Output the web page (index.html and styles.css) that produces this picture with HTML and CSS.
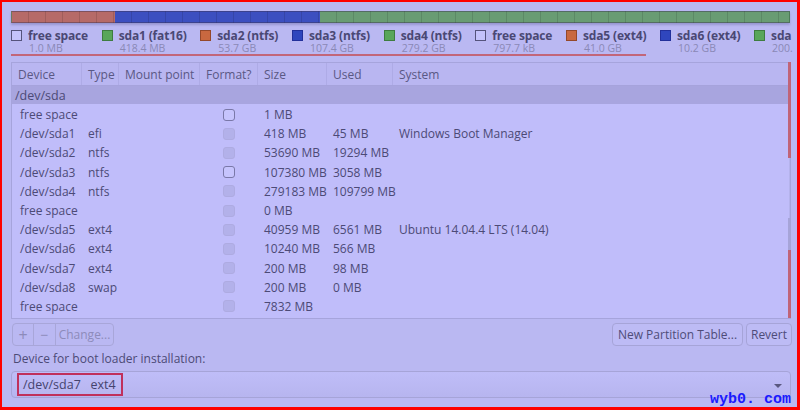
FILE: index.html
```html
<!DOCTYPE html>
<html>
<head>
<meta charset="utf-8">
<link rel="stylesheet" href="styles.css">
</head>
<body>
<div class="frame">
  <div class="bar">
    <div class="seg seg-red" style="width:104px"></div>
    <div class="seg seg-blue" style="width:205px"></div>
    <div class="seg seg-green" style="flex:1"></div>
  </div>
  <div class="legend">
    <div class="item"><span class="sw sw-free"></span><div><div class="lname">free space</div><div class="lsize">1.0 MB</div></div></div>
    <div class="item"><span class="sw sw-green"></span><div><div class="lname">sda1 (fat16)</div><div class="lsize">418.4 MB</div></div></div>
    <div class="item"><span class="sw sw-orange"></span><div><div class="lname">sda2 (ntfs)</div><div class="lsize">53.7 GB</div></div></div>
    <div class="item"><span class="sw sw-blue"></span><div><div class="lname">sda3 (ntfs)</div><div class="lsize">107.4 GB</div></div></div>
    <div class="item"><span class="sw sw-green"></span><div><div class="lname">sda4 (ntfs)</div><div class="lsize">279.2 GB</div></div></div>
    <div class="item"><span class="sw sw-free"></span><div><div class="lname">free space</div><div class="lsize">797.7 kB</div></div></div>
    <div class="item"><span class="sw sw-orange"></span><div><div class="lname">sda5 (ext4)</div><div class="lsize">41.0 GB</div></div></div>
    <div class="item"><span class="sw sw-blue"></span><div><div class="lname">sda6 (ext4)</div><div class="lsize">10.2 GB</div></div></div>
    <div class="item"><span class="sw sw-green"></span><div><div class="lname">sda</div><div class="lsize">200.</div></div></div>
  </div>
  <div class="mark-line"></div>

  <div class="table">
    <div class="row head">
      <div class="c c1">Device</div><div class="c c2">Type</div><div class="c c3">Mount point</div><div class="c c4">Format?</div><div class="c c5">Size</div><div class="c c6">Used</div><div class="c c7">System</div>
    </div>
    <div class="row group"><div class="c">/dev/sda</div></div>
    <div class="body">
      <div class="row"><div class="c c1 in">free space</div><div class="c c2"></div><div class="c c3"></div><div class="c c4"><span class="cb on"></span></div><div class="c c5">1 MB</div><div class="c c6"></div><div class="c c7"></div></div>
      <div class="row"><div class="c c1 in">/dev/sda1</div><div class="c c2">efi</div><div class="c c3"></div><div class="c c4"><span class="cb"></span></div><div class="c c5">418 MB</div><div class="c c6">45 MB</div><div class="c c7">Windows Boot Manager</div></div>
      <div class="row"><div class="c c1 in">/dev/sda2</div><div class="c c2">ntfs</div><div class="c c3"></div><div class="c c4"><span class="cb"></span></div><div class="c c5">53690 MB</div><div class="c c6">19294 MB</div><div class="c c7"></div></div>
      <div class="row"><div class="c c1 in">/dev/sda3</div><div class="c c2">ntfs</div><div class="c c3"></div><div class="c c4"><span class="cb on"></span></div><div class="c c5">107380 MB</div><div class="c c6">3058 MB</div><div class="c c7"></div></div>
      <div class="row"><div class="c c1 in">/dev/sda4</div><div class="c c2">ntfs</div><div class="c c3"></div><div class="c c4"><span class="cb"></span></div><div class="c c5">279183 MB</div><div class="c c6">109799 MB</div><div class="c c7"></div></div>
      <div class="row"><div class="c c1 in">free space</div><div class="c c2"></div><div class="c c3"></div><div class="c c4"><span class="cb"></span></div><div class="c c5">0 MB</div><div class="c c6"></div><div class="c c7"></div></div>
      <div class="row"><div class="c c1 in">/dev/sda5</div><div class="c c2">ext4</div><div class="c c3"></div><div class="c c4"><span class="cb"></span></div><div class="c c5">40959 MB</div><div class="c c6">6561 MB</div><div class="c c7">Ubuntu 14.04.4 LTS (14.04)</div></div>
      <div class="row"><div class="c c1 in">/dev/sda6</div><div class="c c2">ext4</div><div class="c c3"></div><div class="c c4"><span class="cb"></span></div><div class="c c5">10240 MB</div><div class="c c6">566 MB</div><div class="c c7"></div></div>
      <div class="row"><div class="c c1 in">/dev/sda7</div><div class="c c2">ext4</div><div class="c c3"></div><div class="c c4"><span class="cb"></span></div><div class="c c5">200 MB</div><div class="c c6">98 MB</div><div class="c c7"></div></div>
      <div class="row"><div class="c c1 in">/dev/sda8</div><div class="c c2">swap</div><div class="c c3"></div><div class="c c4"><span class="cb"></span></div><div class="c c5">200 MB</div><div class="c c6">0 MB</div><div class="c c7"></div></div>
      <div class="row"><div class="c c1 in">free space</div><div class="c c2"></div><div class="c c3"></div><div class="c c4"><span class="cb"></span></div><div class="c c5">7832 MB</div><div class="c c6"></div><div class="c c7"></div></div>
    </div>
    <div class="scroll">
      <div class="sc-red1"></div>
      <div class="sc-track"></div>
      <div class="sc-thumb"></div>
      <div class="sc-red2"></div>
    </div>
  </div>

  <div class="toolbar">
    <div class="btn-group">
      <span class="tb plus">+</span><span class="tb minus">−</span><span class="tb change">Change...</span>
    </div>
    <div class="right-btns">
      <span class="btn btn-npt">New Partition Table...</span>
      <span class="btn btn-rev">Revert</span>
    </div>
  </div>

  <div class="boot-label">Device for boot loader installation:</div>
  <div class="combo">
    <span class="combo-val">/dev/sda7&nbsp;&nbsp;&nbsp;ext4</span>
    <span class="arrow"></span>
  </div>
  <div class="watermark">wyb0. com</div>
</div>
</body>
</html>
```

FILE: styles.css
```css
* { box-sizing: border-box; }
html, body { margin: 0; padding: 0; }
body {
  font-family: "Open Sans", "Noto Sans", "DejaVu Sans", sans-serif;
  font-size: 12px;
  color: #4c4a76;
  background: #bab8f2;
}
.frame {
  position: relative;
  width: 800px;
  height: 410px;
  border-style: solid;
  border-color: #ff0000;
  border-width: 2px 3px 3px 2px;
  background: #bab8f2;
  padding: 9px 7px 0 9px;
  overflow: hidden;
}
.bar {
  display: flex;
  height: 12px;
  width: 779px;
  box-shadow: 0 2px 2px rgba(90, 88, 150, 0.35);
}
.seg {
  height: 100%;
  border-top: 1px solid rgba(60, 50, 80, 0.45);
  border-bottom: 1px solid rgba(60, 50, 80, 0.45);
  background-image: repeating-linear-gradient(90deg, transparent 0 16px, rgba(0,0,0,0.12) 16px 17px);
}
.seg-red { background-color: #b66a68; border-left: 1px solid #6a7a60; }
.seg-blue { background-color: #3c4fc0; }
.seg-green { background-color: #699c73; border-right: 1px solid #4d7a58; }

.legend {
  display: flex;
  gap: 13.7px;
  margin-top: 5px;
  white-space: nowrap;
  overflow-x: clip;
  overflow-y: visible;
  width: 782px;
  height: 26px;
}
.item { display: flex; align-items: flex-start; gap: 6px; flex: none; }
.sw {
  width: 11px; height: 11px; margin-top: 2px; flex: none;
}
.sw-free { border: 1px solid #55537c; background: #c4c2fb; }
.sw-green { background: #59a65a; border: 1px solid #3e7c40; }
.sw-orange { background: #c86840; border: 1px solid #94482a; }
.sw-blue { background: #2f46bd; border: 1px solid #22309a; }
.lname { font-weight: bold; font-size: 12px; line-height: 15px; color: #4a4874; letter-spacing: -0.15px; }
.lsize { font-size: 10.5px; line-height: 11px; color: #8a88b6; margin-left: 1px; }

.mark-line {
  width: 635px;
  height: 2px;
  background: #c26679;
  margin-top: 0;
}

.table {
  position: relative;
  margin-top: 6px;
  width: 780px;
  height: 257px;
  border: 1px solid #a6a4dc;
  background: #c0bdfa;
}
.row { display: flex; height: 19.2px; align-items: center; }
.c { white-space: nowrap; padding-left: 6px; }
.c1 { width: 70px; }
.c2 { width: 37px; }
.c3 { width: 81px; }
.c4 { width: 58px; display: flex; justify-content: center; padding-left: 0; }
.c5 { width: 69px; }
.c6 { width: 66px; }
.c7 { flex: 1; }
.row.head {
  height: 23px;
  background: #b9b6f1;
  border-bottom: 1px solid #a6a3dc;
  color: #5a5884;
}
.row.head .c { height: 100%; display: flex; align-items: center; border-right: 1px solid #aeabe6; padding-left: 6px; }
.row.head .c4 { justify-content: flex-start; }
.row.head .c7 { border-right: none; }
.row.group {
  height: 18px;
  background: #a8a5df;
  font-size: 12.5px;
}
.row.group .c { padding-left: 3px; }
.body { padding-top: 1px; }
.c1.in { padding-left: 8px; }
.cb {
  display: inline-block;
  width: 12px; height: 12px;
  border-radius: 3px;
  background: #b3b1ea;
  border: 1px solid #aeabe2;
}
.cb.on { background: #c6c4fd; border-color: #7a78a8; }

.scroll {
  position: absolute;
  right: -1px;
  top: -1px;
  width: 3px;
  height: 256px;
  display: flex;
  flex-direction: column;
}
.sc-red1 { height: 96px; background: #c06478; }
.sc-track { height: 60px; background: #b5b3ec; width: 1px; margin-left: 1px; }
.sc-thumb { height: 32px; background: #a6a4d8; }
.sc-red2 { flex: 1; background: #c06478; }

.toolbar {
  display: flex;
  justify-content: space-between;
  margin-top: 4px;
  width: 781px;
  height: 23px;
}
.btn-group {
  display: flex;
  height: 23px;
  margin-left: 1px;
  border: 1px solid #a8a6d9;
  border-radius: 4px;
  overflow: hidden;
  color: #8d8bba;
}
.tb { display: flex; align-items: center; justify-content: center; height: 100%; }
.plus { width: 21px; border-right: 1px solid #a8a6d9; font-size: 16px; }
.minus { width: 22px; border-right: 1px solid #a8a6d9; font-size: 14px; }
.change { width: 57px; font-size: 12px; }
.right-btns { display: flex; gap: 3px; }
.btn {
  display: flex; align-items: center; justify-content: center;
  height: 23px;
  border: 1px solid #a6a4d8;
  border-radius: 4px;
  padding: 0 2px;
  white-space: nowrap;
  color: #4e4c78;
  background: #bdbbf5;
}
.btn-npt { width: 131px; }
.btn-rev { width: 46px; }

.boot-label {
  margin-top: 5px;
  margin-left: 2px;
  line-height: 16px;
}
.combo {
  position: relative;
  margin-top: 4px;
  width: 780px;
  height: 27px;
  border: 1px solid #a6a4d8;
  border-radius: 4px;
  background: linear-gradient(#bfbdf8, #b7b5ef);
  display: flex;
  align-items: center;
  padding-left: 5px;
}
.combo-val {
  display: flex;
  align-items: center;
  height: 23px;
  padding: 0 5px 0 4px;
  border: 2px solid #c0305c;
  font-size: 12.5px;
  color: #45436e;
}
.arrow {
  position: absolute;
  right: 8px;
  top: 12px;
  width: 0; height: 0;
  border-left: 4px solid transparent;
  border-right: 4px solid transparent;
  border-top: 4px solid #5a5880;
}
.watermark {
  position: absolute;
  right: 6px;
  bottom: 0px;
  font-family: "Liberation Mono", "DejaVu Sans Mono", monospace;
  font-weight: bold;
  font-size: 15px;
  color: #1a1aff;
  line-height: 15px;
}
```
